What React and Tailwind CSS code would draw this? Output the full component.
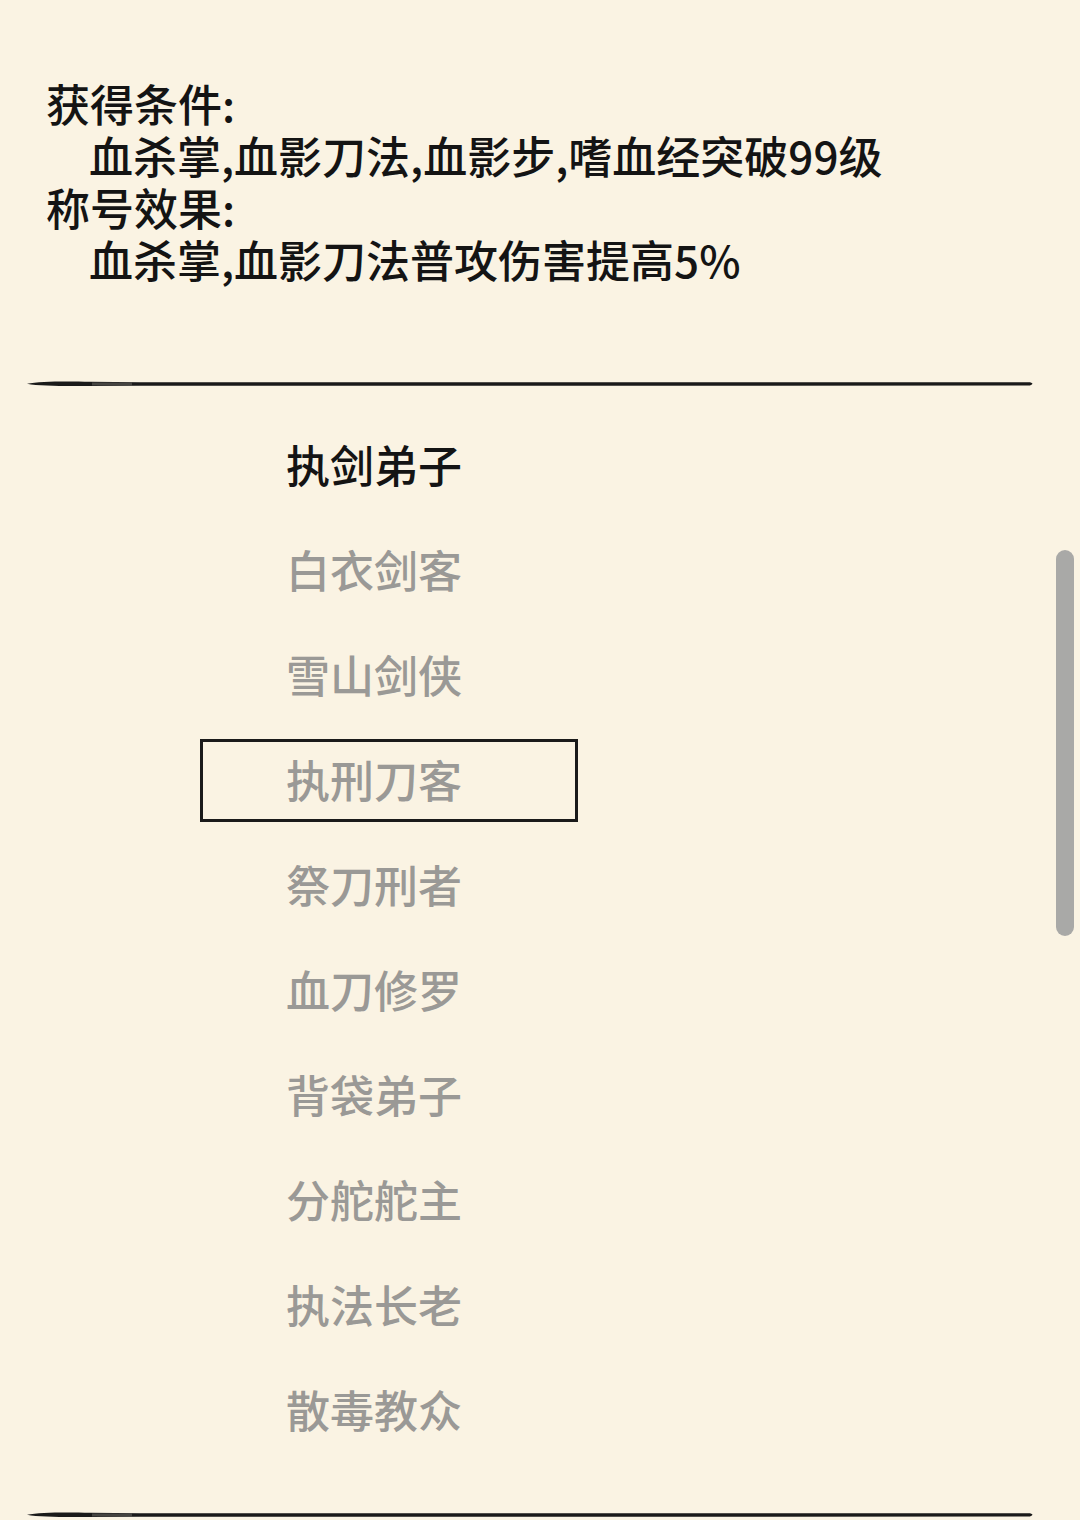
import React from 'react';

const titles = [
  '执剑弟子',
  '白衣剑客',
  '雪山剑侠',
  '执刑刀客',
  '祭刀刑者',
  '血刀修罗',
  '背袋弟子',
  '分舵舵主',
  '执法长老',
  '散毒教众',
];

const unlocked = 0;
const selected = 3;

function BrushLine() {
  return (
    <svg width="1080" height="10" viewBox="0 0 1080 10" className="block">
      <path d="M27 4.8 C40 2 70 2.3 90 2.8 L140 3.2 L1030 3.2 Q1035 4.8 1030 6.6 L140 6.8 L90 7 C70 7.2 40 7.4 27 4.8 Z" fill="#1a1a1a" />
      <path d="M92 3.4 L132 3.6 L132 6.4 L92 6.6 Z" fill="#6f6d68" opacity="0.5" />
    </svg>
  );
}

export default function App() {
  return (
    <div className="relative w-[1080px] h-[1520px] overflow-hidden bg-[#FAF3E3] font-['Noto_Sans_CJK_SC','Noto_Sans',sans-serif]">
      {/* 称号说明 */}
      <div className="pt-[77px] pl-[46px] text-[44px] leading-[52px] font-medium text-[#141414]">
        <div>获得条件:</div>
        <div className="pl-[43px]">血杀掌,血影刀法,血影步,嗜血经突破99级</div>
        <div>称号效果:</div>
        <div className="pl-[43px]">血杀掌,血影刀法普攻伤害提高5%</div>
      </div>

      <div className="mt-[94px]">
        <BrushLine />
      </div>

      {/* 称号列表 */}
      <div className="mt-[22px] flex flex-col">
        {titles.map((t, i) => (
          <div key={t} className="h-[105px] flex items-center">
            <div
              className={
                i === selected
                  ? 'ml-[200px] mt-[4px] w-[378px] h-[83px] flex items-center pl-[83px] pb-[4px] border-[3px] border-[#1a1a1a]'
                  : 'ml-[200px] w-[378px] h-[82px] flex items-center pl-[86px]'
              }
            >
              <span className={i === unlocked ? 'text-[44px] leading-none font-medium text-[#141414]' : 'text-[44px] leading-none font-medium text-[#9a9996]'}>
                {t}
              </span>
            </div>
          </div>
        ))}
      </div>

      <div className="mt-[49px]">
        <BrushLine />
      </div>

      {/* 滚动条 */}
      <div className="absolute left-[1056px] top-[550px] w-[18px] h-[386px] rounded-full bg-[#a9a9a7]" />
    </div>
  );
}
